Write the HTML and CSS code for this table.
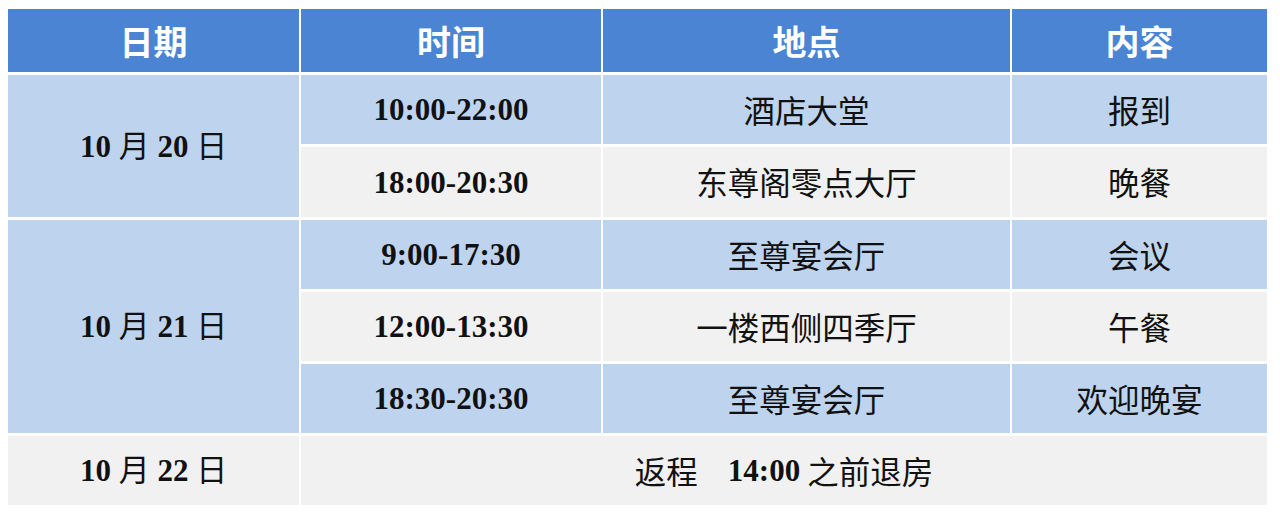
FILE: index.html
```html
<!DOCTYPE html>
<html lang="zh-CN">
<head>
<meta charset="utf-8">
<title>日程安排</title>
<link rel="stylesheet" href="styles.css">
</head>
<body>
<div class="schedule">
  <div class="cell head">日期</div>
  <div class="cell head">时间</div>
  <div class="cell head">地点</div>
  <div class="cell head">内容</div>

  <div class="cell date blue span2"><span class="num">10</span> 月 <span class="num">20</span> 日</div>
  <div class="cell blue num">10:00-22:00</div>
  <div class="cell blue">酒店大堂</div>
  <div class="cell blue">报到</div>

  <div class="cell grey num">18:00-20:30</div>
  <div class="cell grey">东尊阁零点大厅</div>
  <div class="cell grey">晚餐</div>

  <div class="cell date blue span3"><span class="num">10</span> 月 <span class="num">21</span> 日</div>
  <div class="cell blue num">9:00-17:30</div>
  <div class="cell blue">至尊宴会厅</div>
  <div class="cell blue">会议</div>

  <div class="cell grey num">12:00-13:30</div>
  <div class="cell grey">一楼西侧四季厅</div>
  <div class="cell grey">午餐</div>

  <div class="cell blue num">18:30-20:30</div>
  <div class="cell blue">至尊宴会厅</div>
  <div class="cell blue">欢迎晚宴</div>

  <div class="cell date grey"><span class="num">10</span> 月 <span class="num">22</span> 日</div>
  <div class="cell grey wide">返程<span class="sp"></span><span class="num">14:00</span> 之前退房</div>
</div>
</body>
</html>
```

FILE: styles.css
```css
html, body {
  margin: 0;
  padding: 0;
  background: #ffffff;
}

body {
  padding: 9px 0 0 8px;
  font-family: "Noto Sans CJK SC", "Liberation Sans", sans-serif;
  color: #111111;
}

.schedule {
  display: grid;
  grid-template-columns: 291px 300px 407px 255px;
  grid-template-rows: 63px 69px 70px 69px 69px 69px 69px;
  column-gap: 2px;
  row-gap: 3px;
  width: 1259px;
}

.cell {
  display: flex;
  align-items: center;
  justify-content: center;
  font-size: 31.5px;
  line-height: 1;
  white-space: pre;
}

.head {
  background: #4a84d3;
  color: #ffffff;
  font-weight: 700;
  font-size: 34px;
}

.blue {
  background: #bed4ee;
}

.grey {
  background: #f1f1f1;
}

.num {
  font-family: "Liberation Serif", "Noto Sans CJK SC", serif;
  font-weight: 700;
  font-size: 31px;
}

.date {
  font-family: "Liberation Serif", "Noto Sans CJK SC", serif;
  font-size: 31px;
}

.span2 {
  grid-row: span 2;
}

.span3 {
  grid-row: span 3;
}

.wide {
  grid-column: span 3;
}

.sp {
  display: inline-block;
  width: 30px;
}
```
